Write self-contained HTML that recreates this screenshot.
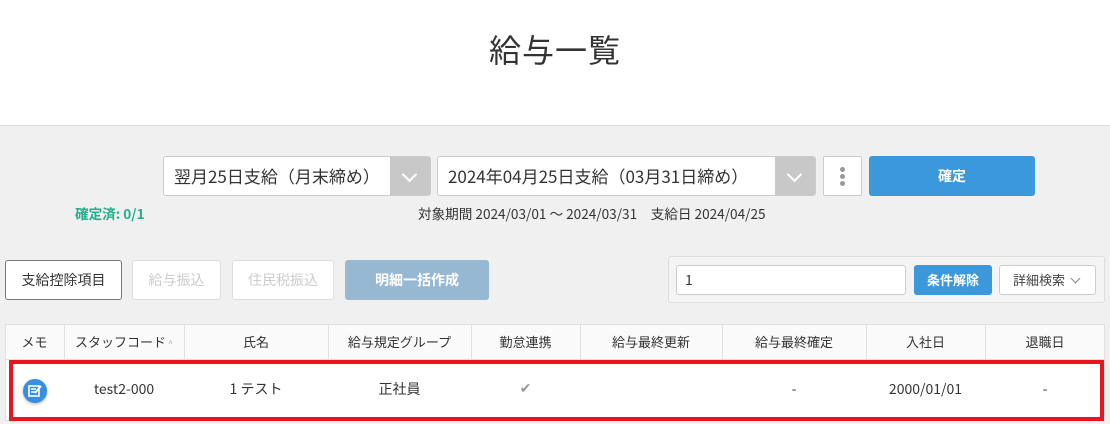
<!DOCTYPE html>
<html><head><meta charset="utf-8"><style>
*{box-sizing:border-box;margin:0;padding:0}
body{width:1110px;height:424px;overflow:hidden;background:#f0f0f0;font-family:"Noto Sans CJK JP","Liberation Sans",sans-serif;color:#333;position:relative;line-height:1.2}
.abs{position:absolute}
.hdr{left:0;top:0;width:1110px;height:126px;background:#fff;border-bottom:1px solid #dcdcdc}
.title{left:0;top:30px;width:1110px;text-align:center;font-size:32px;color:#333;letter-spacing:1px}
.sel{background:#fff;border:1px solid #ccc;border-radius:3px;height:40px;font-size:17px;line-height:38px;padding-left:10px;overflow:hidden;white-space:nowrap}
.arr{position:absolute;right:0;top:0;width:40px;height:38px;background:#c8c8c8}
.arr:after{content:"";position:absolute;left:14px;top:12px;width:9px;height:9px;border-right:2px solid #fff;border-bottom:2px solid #fff;transform:rotate(45deg)}
.btn{height:40px;border:1px solid #ddd;border-radius:3px;background:#fff;font-size:14px;text-align:center;line-height:38px}
.cell{position:absolute;text-align:center;font-size:13px}
</style></head><body>
<div class="abs hdr"></div>
<div class="abs title">給与一覧</div>

<div class="abs sel" style="left:163px;top:156px;width:268px">翌月25日支給（月末締め）<div class="arr"></div></div>
<div class="abs sel" style="left:437px;top:156px;width:379px">2024年04月25日支給（03月31日締め）<div class="arr"></div></div>
<div class="abs" style="left:823px;top:156px;width:39px;height:40px;background:#fff;border:1px solid #ccc;border-radius:2px">
<div class="abs" style="left:16px;top:10px;width:5px;height:5px;border-radius:50%;background:#999"></div>
<div class="abs" style="left:16px;top:17px;width:5px;height:5px;border-radius:50%;background:#999"></div>
<div class="abs" style="left:16px;top:24px;width:5px;height:5px;border-radius:50%;background:#999"></div></div>
<div class="abs" style="left:869px;top:156px;width:166px;height:40px;background:#3a98db;border-radius:3px;color:#fff;font-weight:bold;font-size:14px;text-align:center;line-height:40px">確定</div>

<div class="abs" style="left:75px;top:205px;font-size:13.6px;font-weight:bold;color:#1fb08a">確定済: 0/1</div>
<div class="abs" style="left:418px;top:205px;font-size:13.6px;color:#333;white-space:nowrap">対象期間 2024/03/01 ～ 2024/03/31　支給日 2024/04/25</div>

<div class="abs btn" style="left:5px;top:260px;width:117px;border-color:#777">支給控除項目</div>
<div class="abs btn" style="left:132px;top:260px;width:89px;color:#ccc">給与振込</div>
<div class="abs btn" style="left:232px;top:260px;width:102px;color:#ccc">住民税振込</div>
<div class="abs btn" style="left:345px;top:260px;width:144px;background:#97b8d2;border-color:#97b8d2;color:#fff;font-weight:bold">明細一括作成</div>

<div class="abs" style="left:668px;top:256px;width:437px;height:47px;border:1px solid #ddd;border-radius:3px;background:#f4f4f4"></div>
<div class="abs" style="left:676px;top:265px;width:230px;height:30px;background:#fff;border:1px solid #ccc;border-radius:3px;font-size:14px;line-height:28px;padding-left:8px">1</div>
<div class="abs" style="left:914px;top:265px;width:78px;height:30px;background:#3a98db;border-radius:3px;color:#fff;font-weight:bold;font-size:13px;text-align:center;line-height:30px">条件解除</div>
<div class="abs" style="left:999px;top:265px;width:97px;height:30px;background:#fff;border:1px solid #ccc;border-radius:3px;font-size:13px;line-height:28px;padding-left:13px;color:#444;white-space:nowrap">詳細検索 <span style="display:inline-block;width:7px;height:7px;border-right:1px solid #888;border-bottom:1px solid #888;transform:rotate(45deg);margin:0 0 3px 4px"></span></div>

<div class="abs" style="left:5px;top:324px;width:1100px;height:97px;background:#fff;border:1px solid #e0e0e0"></div>
<div class="abs" style="left:5px;top:324px;width:1100px;height:36px;background:#fafafa;border:1px solid #e0e0e0"></div>
<div class="abs" style="left:64px;top:324px;width:1px;height:36px;background:#e0e0e0"></div>
<div class="abs" style="left:184px;top:324px;width:1px;height:36px;background:#e0e0e0"></div>
<div class="abs" style="left:328px;top:324px;width:1px;height:36px;background:#e0e0e0"></div>
<div class="abs" style="left:471px;top:324px;width:1px;height:36px;background:#e0e0e0"></div>
<div class="abs" style="left:580px;top:324px;width:1px;height:36px;background:#e0e0e0"></div>
<div class="abs" style="left:722px;top:324px;width:1px;height:36px;background:#e0e0e0"></div>
<div class="abs" style="left:866px;top:324px;width:1px;height:36px;background:#e0e0e0"></div>
<div class="abs" style="left:985px;top:324px;width:1px;height:36px;background:#e0e0e0"></div>

<div class="cell" style="left:5px;top:334px;width:59px">メモ</div>
<div class="cell" style="left:64px;top:334px;width:120px">スタッフコード<span style="font-size:9px;color:#aaa"> ^</span></div>
<div class="cell" style="left:184px;top:334px;width:144px">氏名</div>
<div class="cell" style="left:328px;top:334px;width:143px">給与規定グループ</div>
<div class="cell" style="left:471px;top:334px;width:109px">勤怠連携</div>
<div class="cell" style="left:580px;top:334px;width:142px">給与最終更新</div>
<div class="cell" style="left:722px;top:334px;width:144px">給与最終確定</div>
<div class="cell" style="left:866px;top:334px;width:119px">入社日</div>
<div class="cell" style="left:985px;top:334px;width:120px">退職日</div>

<div class="abs" style="left:23px;top:379px;width:24px;height:24px;border-radius:50%;background:#3a8ee0;box-shadow:0 1px 3px rgba(0,0,0,.3)">
<svg width="24" height="24" viewBox="0 0 24 24"><rect x="6" y="7" width="10" height="10" fill="none" stroke="#fff" stroke-width="1.6"/><path d="M8 10h5M8 13h4" stroke="#fff" stroke-width="1.4"/><path d="M12 14l6-7" stroke="#fff" stroke-width="2"/></svg></div>
<div class="cell" style="left:64px;top:381px;width:120px;font-size:14px">test2-000</div>
<div class="cell" style="left:184px;top:381px;width:144px;font-size:14px">1 テスト</div>
<div class="cell" style="left:328px;top:381px;width:143px;font-size:14px">正社員</div>
<div class="cell" style="left:471px;top:380px;width:109px;font-size:14px;color:#999">✔</div>
<div class="cell" style="left:722px;top:381px;width:144px;font-size:14px">-</div>
<div class="cell" style="left:866px;top:381px;width:119px;font-size:14px">2000/01/01</div>
<div class="cell" style="left:985px;top:381px;width:120px;font-size:14px">-</div>

<div class="abs" style="left:9px;top:360px;width:1095px;height:61px;border:4px solid #e8141e"></div>
</body></html>
